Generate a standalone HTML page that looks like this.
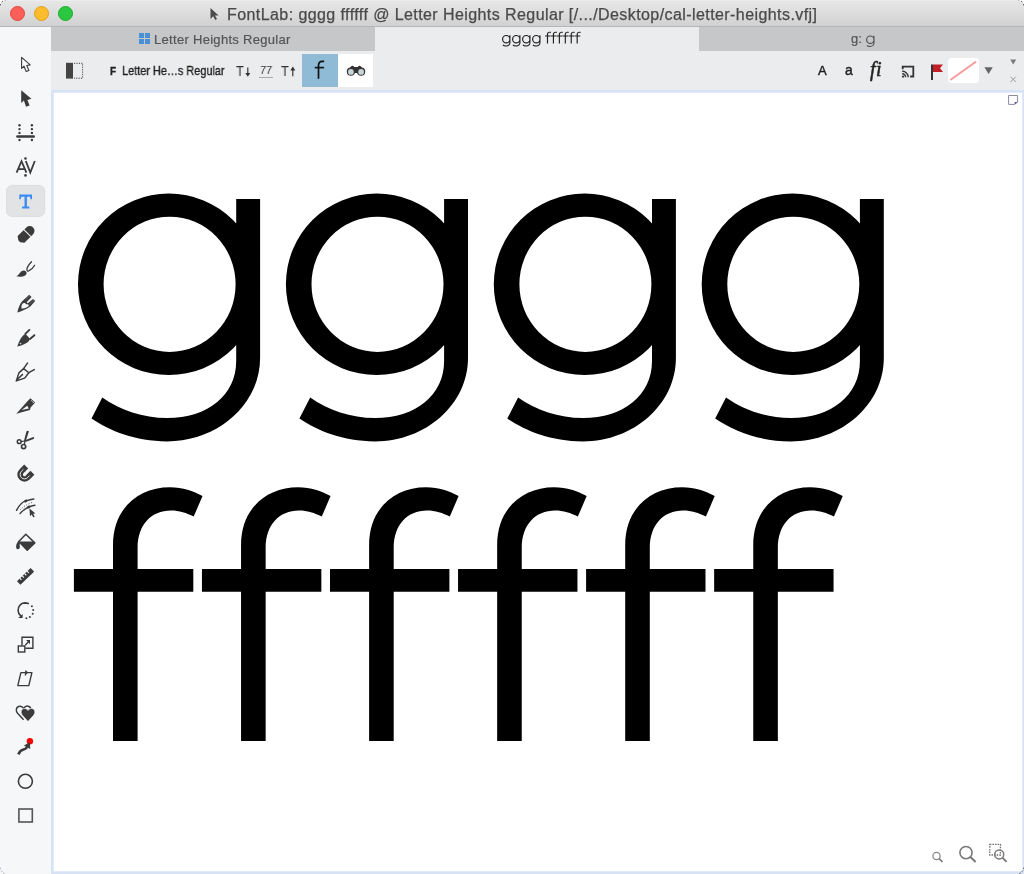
<!DOCTYPE html>
<html><head><meta charset="utf-8">
<style>
*{margin:0;padding:0;box-sizing:border-box}
html,body{width:1024px;height:874px;overflow:hidden;background:#ffffff;font-family:"Liberation Sans",sans-serif}
.abs{position:absolute}
div.abs{will-change:transform}
#titlebar{left:0;top:0;width:1024px;height:27px;background:linear-gradient(#efefef 0,#e6e6e6 1.5px,#dcdcdc 55%,#d1d1d1 100%);border-bottom:1px solid #b6b6b6}
.tl{position:absolute;top:6px;width:15px;height:15px;border-radius:50%}
#title{left:227px;top:6px;font-size:16px;letter-spacing:0.42px;color:#4a4a4a;-webkit-text-stroke:0.25px #4a4a4a;white-space:nowrap}
#lefttb{left:0;top:27px;width:51px;height:847px;background:#f6f7f9}
#tabs{left:51px;top:27px;width:973px;height:24px;background:#c6c7c9}
#tab2{left:375px;top:27px;width:324px;height:24px;background:#ebeced}
#toolbar{left:51px;top:51px;width:973px;height:39px;background:#ebeced}
#canvas{left:51px;top:90px;width:973px;height:784px;background:#d7e2f4}
#canvasin{left:54px;top:93px;width:968px;height:778px;background:#ffffff;box-shadow:0 0 0 0.6px #e6eefa}
.tabtxt{font-size:13px;letter-spacing:0.3px;color:#555;-webkit-text-stroke:0.2px #555;white-space:nowrap}
</style></head><body>
<div id="titlebar" class="abs"></div>
<div class="tl" style="left:10px;background:#fc5f57;border:0.5px solid #e2463f"></div>
<div class="tl" style="left:34px;background:#fdbc2e;border:0.5px solid #e09e1a"></div>
<div class="tl" style="left:58px;background:#2ac840;border:0.5px solid #1aab29"></div>
<svg class="abs" style="left:209px;top:7px" width="11" height="14" viewBox="0 0 11 14"><path d="M1.5 1 L1.5 12 L4.2 9.3 L6.3 13 L8 12.1 L6 8.5 L9.6 8.5 Z" fill="#4a4a4a"/></svg>
<div id="title" class="abs">FontLab: gggg ffffff @ Letter Heights Regular [/.../Desktop/cal-letter-heights.vfj]</div>

<div id="lefttb" class="abs"></div>
<div id="tabs" class="abs"></div>
<div id="tab2" class="abs"></div>
<div id="toolbar" class="abs"></div>
<div id="canvas" class="abs"></div>
<div id="canvasin" class="abs"></div>


<!-- LEFT TOOLBAR ICONS -->
<svg class="abs" style="left:0;top:0" width="51" height="874" viewBox="0 0 51 874">
<g fill="#3b3b3b" stroke="none">
<!-- 1 arrow outline -->
<path d="M21.6 57.4 L21.6 68.4 L24 66.2 L26.2 71.6 L28.9 70.5 L26.8 65.5 L30.2 64.9 Z" fill="#fbfbfc" stroke="#3b3b3b" stroke-width="1.1" stroke-linejoin="round"/>
<!-- 2 arrow filled -->
<path d="M21.2 90.2 L21.2 103 L23.9 100.6 L26 106.8 L29.6 105.4 L27.4 99.9 L31.4 98.8 Z"/>
<!-- 3 measure -->
<rect x="16.2" y="135.2" width="18.8" height="2.6" rx="1.2"/>
<circle cx="19.5" cy="125.3" r="1.2"/><circle cx="19.5" cy="129.1" r="1.2"/><circle cx="19.5" cy="132.9" r="1.2"/><circle cx="19.5" cy="140" r="1.2"/>
<circle cx="31.9" cy="125.3" r="1.2"/><circle cx="31.9" cy="129.1" r="1.2"/><circle cx="31.9" cy="132.9" r="1.2"/><circle cx="31.9" cy="140" r="1.2"/>
<!-- 4 AV -->
<path d="M16.6 172.6 L21.5 161.2 L26.4 172.6 M18.6 169.2 L24.4 169.2 M25.8 161 L30.3 172.6 L34.8 161" fill="none" stroke="#3b3b3b" stroke-width="1.8"/>
<circle cx="25.5" cy="158.5" r="1.3"/><circle cx="25.5" cy="175.4" r="1.3"/>
<!-- 5 T selected -->
<rect x="6.5" y="185.4" width="38.2" height="31" rx="5.5" fill="#e2e3e5" stroke="#d8d9db" stroke-width="0.8"/>
<path d="M19.3 194.6 L32 194.6 L32 199.2 L30.6 199.2 L30 196.7 L26.9 196.7 L26.9 206.6 L29.3 206.6 L29.3 208.5 L22.1 208.5 L22.1 206.6 L24.5 206.6 L24.5 196.7 L21.3 196.7 L20.7 199.2 L19.3 199.2 Z" fill="#3a8bf2"/>
<!-- 6 eraser -->
<g transform="translate(25.8 234.7) rotate(-45) scale(0.9)"><path d="M-10.3 -1.5 L-7.5 -5.3 L6.2 -5.3 A5.3 5.3 0 0 1 6.2 5.3 L-7.5 5.3 L-10.3 1.5 Z"/><rect x="1.9" y="-5.6" width="1.15" height="11.2" fill="#f6f7f9"/></g>
<!-- 7 brush -->
<path d="M16.1 276.3 C18.5 275.8 19.5 272.5 21.8 271 C23.8 269.8 26.6 270.6 26.6 273 C26.6 276 21.5 277.6 16.1 276.3 Z"/>
<path d="M31.5 261.8 C29 264.5 26.9 267.5 26.9 269.6 C26.9 270.9 27.6 271.3 28.7 270.9 C31 270 33.2 267.8 34.6 265.2" fill="none" stroke="#3b3b3b" stroke-width="1.3" stroke-linecap="round"/>
<!-- 8 pen outline w/ striped prongs -->
<path d="M17.3 312.6 C18.4 307.5 20 303.6 22.2 301.2 L29.2 294.8 L31.6 296.9 L26.6 302.2 L27.8 303.3 L33 298.9 L35.2 301 L30.3 306.6 C26.4 309.3 21.5 311.5 17.3 312.6 Z M21.7 308.8 C21 306 22 303.2 24 303 C25 302.9 25.8 303.5 26.3 304.3 C27 304.1 28.6 304 28.8 305.5 C28.8 307 25 308.3 21.7 308.8 Z" fill-rule="evenodd"/>
<path d="M25.6 299.6 L30.2 295.6 M29.3 304.4 L34 300.1" stroke="#8d8d8d" stroke-width="0.45"/>
<!-- 9 pen filled w/ thin prongs -->
<path d="M17.3 346.6 C18.8 341.5 21 337.5 23.6 335.1 L25.6 334.1 L29.8 338.6 L28.9 341.3 C26 343.6 21.5 345.7 17.3 346.6 Z"/>
<path d="M25.3 333.9 L29.4 329.9 M30 339 L34.4 335.2" stroke="#3b3b3b" stroke-width="1.9" stroke-linecap="round"/>
<circle cx="20.5" cy="343.6" r="0.8" fill="#d8d8d8"/>
<!-- 10 fountain pen -->
<path d="M16.3 380.9 L18.9 372.9 L23.6 368.6 L28.8 372.7 L24.7 378.1 Z M16.9 379.8 L22.9 374.1" fill="none" stroke="#3b3b3b" stroke-width="1.45" stroke-linejoin="round"/>
<path d="M23.6 368.6 L27.5 363.1 M28.8 372.7 L34.3 369.6" fill="none" stroke="#3b3b3b" stroke-width="1.5" stroke-linecap="round"/>
<!-- 11 calligraphy knife -->
<path d="M16.3 413.8 L27 401.8 L30.4 398.2 L35.1 402.6 L30.6 407.4 L29.9 410 Z M21.6 410.1 L27.2 405.8 L28.8 408.6 Z" fill-rule="evenodd"/>
<path d="M31.2 400.3 L32.4 401.5 M32.7 401.8 L33.9 403" stroke="#f6f7f9" stroke-width="0.9"/>
<!-- 12 scissors -->
<path d="M26.4 431.6 C26.9 430.6 28.6 430.5 28.9 431.6 L25.6 441.4 L23.9 441 Z"/>
<path d="M33.3 436.9 C34.3 437.1 34.5 438.6 33.6 438.9 L25.5 442 L25 440.3 Z"/>
<path d="M21 441.6 L25 441 M24.3 444.4 L25 441.4" stroke="#3b3b3b" stroke-width="1.2"/>
<circle cx="19.2" cy="441.7" r="1.9" fill="none" stroke="#3b3b3b" stroke-width="1.5"/>
<circle cx="23.6" cy="446.6" r="2.1" fill="none" stroke="#3b3b3b" stroke-width="1.7"/>
<!-- 13 magnet -->
<g transform="translate(24.5 474.5) rotate(45)">
<path d="M-7.2 -6.8 L-7.2 0 A7.2 7.2 0 0 0 7.2 0 L7.2 -6.8 L1.6 -6.8 L1.6 0 A1.6 1.6 0 0 1 -1.6 0 L-1.6 -6.8 Z"/>
<path d="M-4.4 -2.8 L-4.4 0 A4.4 4.4 0 0 0 4.4 0 L4.4 -2.8" fill="none" stroke="#f6f7f9" stroke-width="0.9"/>
<path d="M-7.4 -2.9 L-0.9 -2.9 M0.9 -2.9 L7.4 -2.9" stroke="#5a5a5a" stroke-width="0.3"/>
</g>
<!-- 14 tangent w/ cursor -->
<path d="M16.5 510.3 C19 505.5 22 502 25.8 500.9 C28.5 500 31 499.3 33.8 499" fill="none" stroke="#3b3b3b" stroke-width="1.45" stroke-linecap="round"/>
<path d="M20 513.6 C22.6 510.6 25.6 508.2 28.8 507 C30.8 506.1 32.8 505.6 34.9 505.3" fill="none" stroke="#3b3b3b" stroke-width="1.45" stroke-linecap="round"/>
<path d="M20 510 C23 507 27 504 33 502.2" fill="none" stroke="#3b3b3b" stroke-width="0.9" stroke-dasharray="0.9 1.8"/>
<ellipse cx="25.8" cy="501" rx="1.9" ry="1.3" transform="rotate(-25 25.8 501)"/><ellipse cx="28.8" cy="507" rx="1.7" ry="1.3" transform="rotate(-25 28.8 507)"/>
<path d="M29.4 508.4 L30 516.3 L31.7 514.6 L33.4 517.4 L34.7 516.6 L33.1 513.8 L35.4 513.4 Z"/>
<!-- 15 paint bucket -->
<path d="M25.8 534.3 L34.8 542.9 L27.2 550.2 L18.8 541.6 Z" fill="none" stroke="#3b3b3b" stroke-width="1.5" stroke-linejoin="round"/>
<path d="M18.8 541.4 L33.3 541.4 L34.8 542.9 L27.2 550.2 Z"/>
<path d="M18.9 540.6 C17 542.5 16.1 544.5 16.1 547 C16.1 548.6 17 549.2 17.9 549.2 C19 549.2 19.8 548.4 19.8 547.2 C19.8 545.5 19.6 543.6 20.2 542 Z"/>
<!-- 16 ruler -->
<g transform="translate(25.5 576.4) rotate(-44)"><rect x="-9.5" y="-2.5" width="19" height="5" rx="0.4"/><path d="M-5.4 -2.6 L-5.4 -0.3 M-2 -2.6 L-2 -0.3 M1.4 -2.6 L1.4 -0.3 M4.8 -2.6 L4.8 -0.3" stroke="#f6f7f9" stroke-width="1.2"/></g>
<!-- 17 rotate -->
<path d="M28.3 603.5 C27 603 25.7 602.9 24.6 602.9 C20.7 603 18 606.4 18.1 610.4 C18.1 612.5 19.2 614.6 21 616.2" fill="none" stroke="#3b3b3b" stroke-width="1.6" stroke-linecap="round"/>
<path d="M18.2 617.9 L22.6 617.9 L22.6 614.1 Z"/>
<circle cx="31.9" cy="606.3" r="1"/><circle cx="33.2" cy="610.1" r="1"/><circle cx="32.7" cy="613.8" r="1"/><circle cx="29.9" cy="617" r="1"/><circle cx="26.4" cy="618.2" r="1"/>
<!-- 18 scale -->
<path d="M22 645.4 L22 637.2 L32.9 637.2 L32.9 648.3 L25.4 648.3" fill="none" stroke="#3b3b3b" stroke-width="1.4"/>
<rect x="18.3" y="646" width="6.5" height="6" fill="#f6f7f9" stroke="#3b3b3b" stroke-width="1.4"/>
<path d="M25.2 645.2 L29 641.3" stroke="#3b3b3b" stroke-width="1.3"/>
<path d="M26.1 640.1 L30 640.1 L30 644.3 Z"/>
<!-- 19 slant -->
<path d="M20.9 672.6 L31.9 672.6 L28.8 685.6 L17.8 685.6 Z" fill="none" stroke="#3b3b3b" stroke-width="1.4" stroke-linejoin="round"/>
<path d="M25.5 675.6 L25.5 672.6 L27 672.6" fill="none" stroke="#3b3b3b" stroke-width="1.3"/>
<path d="M25.2 669.9 L28.5 672.5 L25.2 675.1 Z"/>
<!-- 20 hearts -->
<path d="M23.6 719.7 L17.6 713.3 C15.6 711 15.9 707.6 18.5 706.5 C20.6 705.7 22.6 706.6 23.7 708.3 C24.8 706.6 27 705.7 29 706.5 C30.1 707 30.6 707.8 30.9 708.8" fill="none" stroke="#3b3b3b" stroke-width="1.45"/>
<path d="M28 721.5 L22.6 715.6 C20.8 713.6 20.6 711 22 709.6 C23.8 707.8 26.6 708.4 28 710.4 C29.4 708.4 32.2 707.8 34 709.6 C35.4 711 35.2 713.6 33.4 715.6 Z" stroke="#f6f7f9" stroke-width="0.7"/>
<!-- 21 arrow w/ red dot -->
<path d="M18.3 754.4 C19.5 751.8 21 750.2 23.5 749.6 C25.5 749 26 748.4 27.2 747" fill="none" stroke="#3b3b3b" stroke-width="2.6" stroke-linecap="butt"/>
<circle cx="29.9" cy="741.3" r="3.2" fill="#fb0000"/>
<path d="M29.8 742.2 L23.9 745.6 L30.3 749.1 Z"/>
<!-- 22 circle -->
<circle cx="25.4" cy="781.3" r="7" fill="none" stroke="#3b3b3b" stroke-width="1.6"/>
<!-- 23 square -->
<rect x="18.9" y="809" width="13.4" height="13" fill="none" stroke="#545454" stroke-width="1.6"/>
</g>
</svg>

<!-- tab 1 -->
<svg class="abs" style="left:139px;top:33px" width="11" height="11" viewBox="0 0 11 11"><rect x="0" y="0" width="5" height="5" fill="#4a90d9"/><rect x="6" y="0" width="5" height="5" fill="#4a90d9"/><rect x="0" y="6" width="5" height="5" fill="#4a90d9"/><rect x="6" y="6" width="5" height="5" fill="#4a90d9"/></svg>
<div class="abs tabtxt" style="left:154px;top:32px">Letter Heights Regular</div>


<!-- tab 2 text (glyphs) -->
<svg class="abs" style="left:0;top:0" width="1024" height="60" viewBox="0 0 1024 60">
<g fill="#1e1e1e">
<use href="#gg" transform="translate(498.37 26.0) scale(0.0465)"/>
<use href="#gg" transform="translate(508.38 26.0) scale(0.0465)"/>
<use href="#gg" transform="translate(518.39 26.0) scale(0.0465)"/>
<use href="#gg" transform="translate(528.40 26.0) scale(0.0465)"/>
<use href="#ff" transform="translate(541.66 9.05) scale(0.0465)"/>
<use href="#ff" transform="translate(547.60 9.05) scale(0.0465)"/>
<use href="#ff" transform="translate(553.54 9.05) scale(0.0465)"/>
<use href="#ff" transform="translate(559.48 9.05) scale(0.0465)"/>
<use href="#ff" transform="translate(565.42 9.05) scale(0.0465)"/>
<use href="#ff" transform="translate(571.36 9.05) scale(0.0465)"/>
</g>
<g fill="#505050">
<use href="#gg" transform="translate(862.35 26.34) scale(0.0468)"/>
</g>
</svg>
<div class="abs tabtxt" style="left:851px;top:31px;letter-spacing:0;font-size:13px">g:</div>

<!-- toolbar left -->
<svg class="abs" style="left:64px;top:61px" width="22" height="20" viewBox="0 0 22 20">
<rect x="2" y="1.8" width="7" height="15.8" fill="#444"/>
<path d="M10 2.3 L18.6 2.3 L18.6 17.2 L10 17.2" fill="none" stroke="#444" stroke-width="1" stroke-dasharray="1.2 1.2"/>
</svg>
<div class="abs" style="left:110px;top:66px;font-size:10px;font-weight:bold;color:#222;-webkit-text-stroke:0.3px #222">F</div>
<div class="abs" style="left:122px;top:63px;font-size:13px;color:#1e1e1e;white-space:nowrap;transform:scaleX(0.84);transform-origin:0 0;-webkit-text-stroke:0.35px #1e1e1e">Letter He…s Regular</div>
<div class="abs" style="left:236px;top:63px;font-size:14px;color:#333;transform:scaleX(0.92);transform-origin:0 0">T</div>
<svg class="abs" style="left:244px;top:67px" width="8" height="11" viewBox="0 0 8 11"><path d="M3.8 0.5 L3.8 7" stroke="#333" stroke-width="1.15"/><path d="M1.3 6 L6.3 6 L3.8 9.8 Z" fill="#333"/></svg>
<div class="abs" style="left:260px;top:64px;font-size:11px;color:#333;transform:skewX(-5deg)">77</div>
<div class="abs" style="left:259px;top:77px;width:14px;height:1px;background:#aaa"></div>
<div class="abs" style="left:281px;top:63px;font-size:14px;color:#333;transform:scaleX(0.92);transform-origin:0 0">T</div>
<svg class="abs" style="left:289px;top:66px" width="8" height="11" viewBox="0 0 8 11"><path d="M3.8 3 L3.8 10.3" stroke="#333" stroke-width="1.15"/><path d="M1.3 4.4 L6.3 4.4 L3.8 0.6 Z" fill="#333"/></svg>
<div class="abs" style="left:302px;top:54px;width:36px;height:33px;background:#90bbd6"></div>
<div class="abs" style="left:338px;top:54px;width:35px;height:33px;background:#ffffff"></div>
<svg class="abs" style="left:300px;top:52px" width="40" height="36" viewBox="300 52 40 36"><path d="M318.5 78.7 L318.5 65.6 C318.5 62.7 320.2 61.3 322.3 61.3 L324.2 61.3" fill="none" stroke="#111" stroke-width="1.7"/><path d="M314.8 67.6 L324.1 67.6" stroke="#111" stroke-width="1.6"/></svg>
<svg class="abs" style="left:340px;top:60px" width="30" height="20" viewBox="340 60 30 20">
<path d="M349.6 70 C350 67.5 350.6 66 352.3 65.8 C353.6 65.7 354 66.5 354.2 67.6 L357.8 67.6 C358 66.5 358.4 65.7 359.7 65.8 C361.4 66 362 67.5 362.4 70 Z" fill="#333"/>
<rect x="353.5" y="67" width="5" height="6" fill="#333"/>
<circle cx="350.9" cy="71.7" r="4.1" fill="#333"/><circle cx="361.1" cy="71.7" r="4.1" fill="#333"/>
<circle cx="350.9" cy="71.9" r="2.9" fill="#c6d4dc"/><circle cx="361.1" cy="71.9" r="2.9" fill="#c6d4dc"/>
</svg>

<!-- toolbar right -->
<div class="abs" style="left:818px;top:63px;font-size:13px;color:#222;-webkit-text-stroke:0.4px #222">A</div>
<div class="abs" style="left:845px;top:62px;font-size:14px;color:#222;-webkit-text-stroke:0.4px #222">a</div>
<div class="abs" style="left:870px;top:58px;font-size:20px;letter-spacing:0.5px;color:#222;font-family:'Liberation Serif',serif;font-style:italic;-webkit-text-stroke:0.5px #222">fi</div>
<svg class="abs" style="left:895px;top:55px" width="25" height="30" viewBox="895 55 25 30">
<path d="M902.7 69.2 L902.7 66.6 L913.3 66.6 L913.3 76.5 L910.1 76.5" fill="none" stroke="#333" stroke-width="1.8"/>
<path d="M902.2 71.3 A5.8 5.8 0 0 1 908.2 77.2 M902.2 73.8 A3.3 3.3 0 0 1 905.6 77.2" fill="none" stroke="#333" stroke-width="1.4"/>
<circle cx="903" cy="76.6" r="1.15" fill="#333"/>
</svg>
<svg class="abs" style="left:929px;top:63px" width="16" height="18" viewBox="0 0 16 18">
<rect x="2" y="1.5" width="2" height="15.5" fill="#333"/>
<path d="M4 1.5 L14 1.5 L11 5.3 L14 9 L4 9 Z" fill="#c41e27"/>
</svg>
<div class="abs" style="left:948px;top:58px;width:31px;height:25px;background:#fff;border-radius:4px"></div>
<svg class="abs" style="left:948px;top:58px" width="31" height="25" viewBox="0 0 31 25"><path d="M3 21.5 L27.5 4" stroke="#f59c9c" stroke-width="2.1" stroke-linecap="round"/></svg>
<svg class="abs" style="left:983px;top:66px" width="11" height="9" viewBox="0 0 11 9"><path d="M1.4 1.3 L9.8 1.3 L5.6 7.9 Z" fill="#666"/></svg>
<svg class="abs" style="left:1008px;top:57px" width="10" height="28" viewBox="0 0 10 28"><path d="M2.2 2.4 L8.2 2.4 L5.2 7.6 Z" fill="#7a7a7a"/><path d="M2.5 19.7 L7.8 25 M7.8 19.7 L2.5 25" stroke="#999" stroke-width="1"/></svg>

<!-- canvas note icon -->
<svg class="abs" style="left:1006px;top:93px" width="14" height="14" viewBox="0 0 14 14">
<path d="M2.6 2.5 L11.6 2.5 L11.6 9 L8.6 11.4 L2.6 11.4 Z" fill="#fff" stroke="#8a8aa0" stroke-width="1"/>
<path d="M11.6 9 L8.6 9 L8.6 11.4 Z" fill="#55557a"/>
</svg>

<!-- zoom icons -->
<svg class="abs" style="left:920px;top:835px" width="100" height="34" viewBox="920 835 100 34">
<circle cx="936.5" cy="856" r="3.6" fill="none" stroke="#8a8a8a" stroke-width="1.3"/>
<path d="M939.1 858.6 L942.6 862" stroke="#7a7a7a" stroke-width="1.7"/>
<circle cx="966" cy="852.6" r="6.1" fill="none" stroke="#777" stroke-width="1.6"/>
<path d="M970.4 857 L975.6 862" stroke="#777" stroke-width="2"/>
<rect x="989.8" y="844.4" width="10.6" height="10.6" fill="none" stroke="#707070" stroke-width="1.3" stroke-dasharray="1.5 1.1"/>
<circle cx="999.2" cy="854.4" r="4.5" fill="none" stroke="#777" stroke-width="1.5"/>
<path d="M1002.6 857.8 L1006.6 861.9" stroke="#777" stroke-width="1.9"/>
</svg>

<!-- BIG GLYPHS -->
<svg class="abs" style="left:0;top:0" width="1024" height="874" viewBox="0 0 1024 874">
<defs>
<path id="gg" fill-rule="nonzero" d="
M168.8 193.5 A90.8 90.8 0 1 1 168.8 375.1 A90.8 90.8 0 1 1 168.8 193.5 Z
M169.6 216.7 A66 67.6 0 1 0 169.6 351.9 A66 67.6 0 1 0 169.6 216.7 Z
M236.2 199 L260.1 199 L260.1 358 C260.1 404 218.4 441.4 167 441.4 C135 441.4 110 431 91.5 418.6 L102.3 397.5 C120 410 143 418 167 418 C208 418 236.2 395 236.2 361 Z"/>
<path id="ff" d="
M113 741 L113 545 C113 508 139 487.2 170 487.2 C183 487.2 193 491 202.5 496.1 L193.7 516.6 C187 513 179 510.5 171 510.5 C151 510.5 137.6 525 137.6 548 L137.6 741 Z
M73.9 569 L193.3 569 L193.3 591.7 L73.9 591.7 Z"/>
</defs>
<use href="#gg" x="0"/>
<use href="#gg" x="207.9"/>
<use href="#gg" x="415.8"/>
<use href="#gg" x="623.7"/>
<use href="#ff" x="0"/>
<use href="#ff" x="128.05"/>
<use href="#ff" x="256.10"/>
<use href="#ff" x="384.15"/>
<use href="#ff" x="512.20"/>
<use href="#ff" x="640.25"/>
</svg>


<!-- window corners -->
<svg class="abs" style="left:0;top:0" width="8" height="8" viewBox="0 0 8 8"><path d="M0 0 L6 0 C2.5 0.5 0.5 2.5 0 6 Z" fill="#fff"/><path d="M0 5.6 C0.6 2.6 2.6 0.6 5.6 0" fill="none" stroke="#444" stroke-width="1" stroke-dasharray="1.6 2.2"/></svg>
<svg class="abs" style="left:1016px;top:0" width="8" height="8" viewBox="0 0 8 8"><path d="M8 0 L2 0 C5.5 0.5 7.5 2.5 8 6 Z" fill="#fff"/><path d="M8 5.6 C7.4 2.6 5.4 0.6 2.4 0" fill="none" stroke="#444" stroke-width="1" stroke-dasharray="1.6 2.2"/></svg>
<svg class="abs" style="left:0;top:866px" width="8" height="8" viewBox="0 0 8 8"><path d="M0 1.5 C0.6 4.5 2.6 7 5.6 8" fill="none" stroke="#9ab" stroke-width="1" stroke-dasharray="1.6 1.6"/></svg>
<svg class="abs" style="left:1016px;top:866px" width="8" height="8" viewBox="0 0 8 8"><path d="M8 1.5 C7.4 4.5 5.4 7 2.4 8" fill="none" stroke="#555" stroke-width="1" stroke-dasharray="1.6 1.6"/></svg>
</body></html>
